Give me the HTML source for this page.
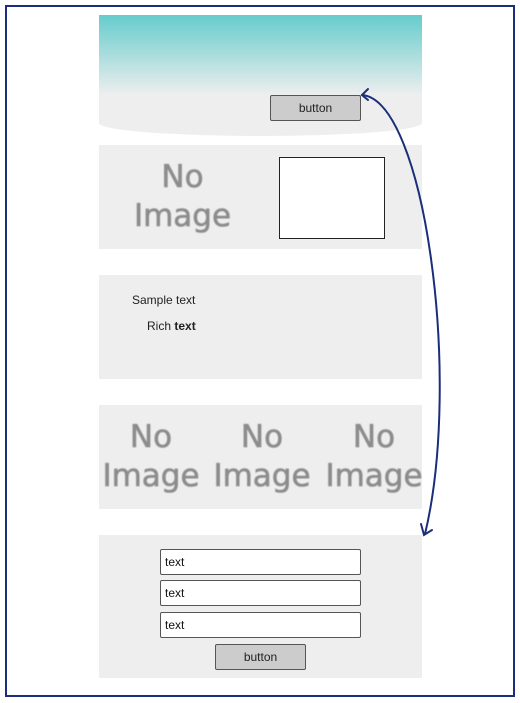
<!DOCTYPE html><html><head><style>
body{margin:0;width:520px;height:703px;background:#fff;position:relative;overflow:hidden;font-family:"Comic Sans MS","Liberation Sans",sans-serif}
.a{position:absolute}
.p{position:absolute;left:99px;width:323px;background:#eeeeee}
.ni{position:absolute;color:#8c8c8c;font-family:"DejaVu Sans","Liberation Sans",sans-serif;font-size:31px;line-height:39px;text-align:center;filter:blur(0.5px);-webkit-text-stroke:0.6px #8c8c8c}
.in{position:absolute;left:160px;width:195px;height:24px;background:#fff;border:1px solid #555;border-radius:2px;font-size:12px;line-height:24px;padding-left:4px;box-sizing:content-box;color:#111}
.btn{position:absolute;background:#ccc;border:1px solid #555;border-radius:2px;font-size:12px;text-align:center;color:#222}
</style></head><body>
<div class="a" style="left:5px;top:5px;width:506px;height:688px;border:2px solid #1a2e7a"></div>
<div class="p" style="top:15px;height:80px;background:linear-gradient(#66cccc,#eeeeee)"></div>
<div class="p" style="top:95px;height:28px"></div>
<div class="a" style="left:99px;top:110px;width:323px;height:26px;background:#eee;border-radius:50%"></div>
<div class="btn" style="left:270px;top:95px;width:89px;height:24px;line-height:24px">button</div>
<div class="p" style="top:145px;height:104px"></div>
<div class="ni" style="left:120px;top:158px;width:125px">No<br>Image</div>
<div class="a" style="left:279px;top:157px;width:104px;height:80px;background:#fff;border:1px solid #222"></div>
<div class="p" style="top:275px;height:104px"></div>
<div class="a" style="left:132px;top:293px;font-size:12px;color:#222">Sample text</div>
<div class="a" style="left:147px;top:319px;font-size:12px;color:#222;font-family:'Liberation Sans',sans-serif">Rich <b>text</b></div>
<div class="p" style="top:405px;height:104px"></div>
<div class="ni" style="left:92px;top:418px;width:118px">No<br>Image</div>
<div class="ni" style="left:203px;top:418px;width:118px">No<br>Image</div>
<div class="ni" style="left:315px;top:418px;width:118px">No<br>Image</div>
<div class="p" style="top:535px;height:143px"></div>
<div class="in" style="top:549px">text</div>
<div class="in" style="top:580px">text</div>
<div class="in" style="top:612px">text</div>
<div class="btn" style="left:215px;top:644px;width:89px;height:24px;line-height:24px">button</div>
<svg class="a" style="left:0;top:0" width="520" height="703"><g fill="none" stroke="#1a2e7a" stroke-width="2" stroke-linecap="round">
<path d="M362,95 C425,100 462,380 425,534"/>
<path d="M368,89 L362,95 L368,100"/>
<path d="M421,524 L424,535 L432,530"/>
</g></svg>
</body></html>
